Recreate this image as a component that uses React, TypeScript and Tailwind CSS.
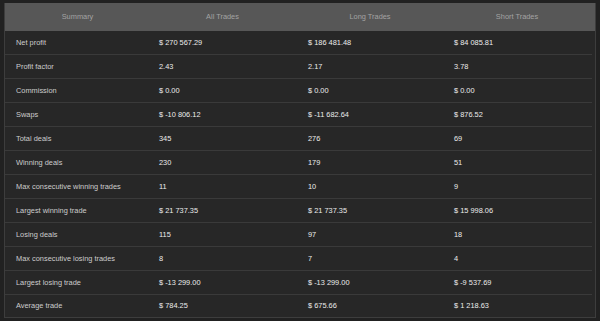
const rows: [string, string, string, string][] = [
  ["Net profit", "$ 270 567.29", "$ 186 481.48", "$ 84 085.81"],
  ["Profit factor", "2.43", "2.17", "3.78"],
  ["Commission", "$ 0.00", "$ 0.00", "$ 0.00"],
  ["Swaps", "$ -10 806.12", "$ -11 682.64", "$ 876.52"],
  ["Total deals", "345", "276", "69"],
  ["Winning deals", "230", "179", "51"],
  ["Max consecutive winning trades", "11", "10", "9"],
  ["Largest winning trade", "$ 21 737.35", "$ 21 737.35", "$ 15 998.06"],
  ["Losing deals", "115", "97", "18"],
  ["Max consecutive losing trades", "8", "7", "4"],
  ["Largest losing trade", "$ -13 299.00", "$ -13 299.00", "$ -9 537.69"],
  ["Average trade", "$ 784.25", "$ 675.66", "$ 1 218.63"],
]

const cols = "grid grid-cols-[143px_149px_146px_148px]"

export default function App() {
  return (
    <div className="w-[600px] h-[321px] bg-[#212121] pt-[3px] pl-[4px] font-['Liberation_Sans',Arial,sans-serif] text-[7.4px] overflow-hidden">
      <div className="w-[592px] bg-[#272727] border-x border-b border-[#3d3d3d]">
        {/* header */}
        <div className={`${cols} h-[28px] bg-[#575757] text-[#a3a3a3] items-center pr-[4px]`}>
          <div className="text-center pl-[2px]">Summary</div>
          <div className="text-center">All Trades</div>
          <div className="text-center">Long Trades</div>
          <div className="text-center">Short Trades</div>
        </div>
        <div className="pr-[3px]">
          {rows.map((r, i) => (
            <div
              key={r[0]}
              className={`${cols} items-center ${i < rows.length - 1 ? "h-[24px] border-b border-[#3a3a3a]" : "h-[22px]"}`}
            >
              <div className="pl-[11px] text-[#cdcdcd]">{r[0]}</div>
              <div className="pl-[11px] text-[#ececec]">{r[1]}</div>
              <div className="pl-[11px] text-[#ececec]">{r[2]}</div>
              <div className="pl-[11px] text-[#ececec]">{r[3]}</div>
            </div>
          ))}
        </div>
      </div>
    </div>
  )
}
